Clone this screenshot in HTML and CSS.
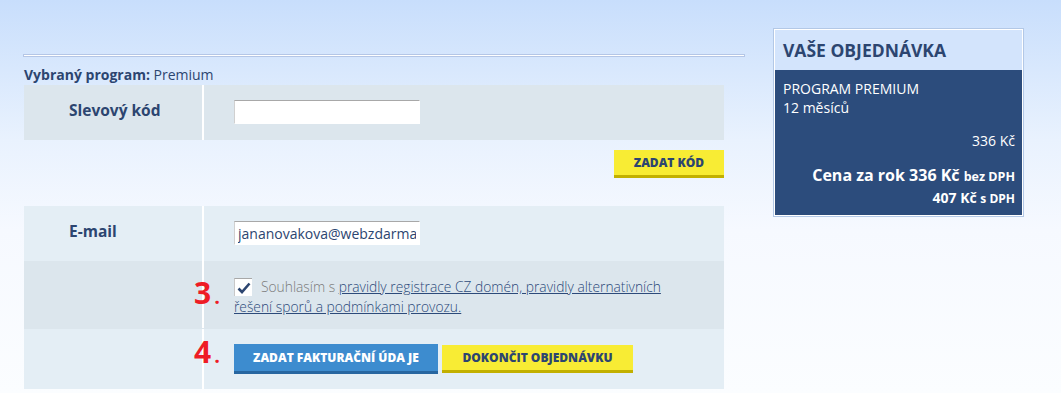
FILE: index.html
```html
<!DOCTYPE html>
<html lang="cs">
<head>
  <meta charset="utf-8">
  <title>Objednávka</title>
  <link rel="stylesheet" href="styles.css">
</head>
<body>
<div class="page">
  <div class="main">
    <div class="rule"></div>
    <p class="program"><b>Vybraný program:</b> Premium</p>

    <div class="form">
      <div class="row dark">
        <div class="lbl">Slevový kód</div>
        <div class="fld"><input class="txt" type="text"></div>
      </div>
    </div>
    <div class="actions"><button class="btn yellow">ZADAT KÓD</button></div>

    <div class="form">
      <div class="row light">
        <div class="lbl">E-mail</div>
        <div class="fld"><input class="txt" type="text" value="jananovakova@webzdarma.cz"></div>
      </div>
      <div class="row dark consent">
        <div class="lbl"></div>
        <div class="fld check">
          <p class="agree"><span class="box"><svg width="14" height="12" viewBox="0 0 14 12"><path d="M1.5 6.5 L5 10 L12.5 1.5" fill="none" stroke="#2c4570" stroke-width="2.6"/></svg></span>Souhlasím s <a href="#">pravidly registrace CZ domén, pravidly alternativních řešení sporů a podmínkami provozu.</a></p>
        </div>
        <span class="step s3">3<small>.</small></span>
      </div>
      <div class="row light buttons">
        <div class="lbl"></div>
        <div class="fld">
          <button class="btn blue">ZADAT FAKTURAČNÍ ÚDA JE</button>
          <button class="btn yellow big">DOKONČIT OBJEDNÁVKU</button>
        </div>
        <span class="step s4">4<small>.</small></span>
      </div>
    </div>
  </div>

  <aside class="order">
    <h2 class="order-head">VAŠE OBJEDNÁVKA</h2>
    <div class="order-body">
      <div>PROGRAM PREMIUM</div>
      <div>12 měsíců</div>
      <div class="sum">336 Kč</div>
      <div class="total">Cena za rok 336 Kč <small>bez DPH</small></div>
      <div class="vat">407 Kč <small>s DPH</small></div>
    </div>
  </aside>
</div>
</body>
</html>
```

FILE: styles.css
```css
html, body {
  margin: 0;
  height: 100%;
}
body {
  font-family: "Open Sans", "DejaVu Sans", sans-serif;
  color: #2c4570;
  background: linear-gradient(#c8defc 0, #e9f2fe 140px, #f6f9ff 230px, #fbfdff 393px);
}
.page {
  display: flex;
  align-items: flex-start;
  gap: 28px;
  padding: 28px 0 0 23px;
}
.main {
  width: 722px;
  padding-top: 26px;
}
.rule {
  height: 1px;
  background: #fff;
  border: 1px solid #b4c6e6;
}
.program {
  margin: 9px 0 1px 1px;
  font-size: 14px;
  line-height: 18px;
}
.form {
  width: 700px;
  margin-left: 1px;
}
.row {
  display: flex;
  position: relative;
}
.dark { background: #dce6ed; }
.light { background: #e4eef5; }
.lbl {
  width: 133px;
  padding: 15px 0 0 45px;
  border-right: 2px solid #fff;
  font-size: 15.5px;
  font-weight: bold;
  line-height: 20px;
  height: 40px;
}
.fld {
  flex: 1;
  padding: 15px 0 0 30px;
  height: 40px;
}
.txt {
  display: block;
  box-sizing: border-box;
  width: 186px;
  height: 24px;
  margin: 0;
  padding: 0 3px;
  border: 1px solid #fff;
  border-top-color: #a8a8a8;
  border-left-color: #d0d0d0;
  background: #fff;
  font-family: "Open Sans", sans-serif;
  font-size: 14px;
  color: #2c4570;
}
.actions {
  display: flex;
  justify-content: flex-end;
  width: 700px;
  margin: 10px 0 28px 1px;
}
.btn {
  border: none;
  margin: 0;
  padding: 0;
  font-family: "Open Sans", sans-serif;
  font-size: 12px;
  font-weight: 800;
  cursor: pointer;
}
.yellow {
  height: 28px;
  width: 110px;
  background: #f8ec34;
  border-bottom: 3px solid #c2b000;
  color: #2c4570;
}
.yellow.big {
  width: 191px;
  margin-top: 1px;
}
.blue {
  height: 30px;
  width: 204px;
  background: #3d8ccf;
  border-bottom: 3px solid #2766a0;
  color: #fff;
}
.buttons .lbl, .buttons .fld { height: 45px; }
.buttons .fld {
  display: flex;
  align-items: flex-start;
  gap: 4px;
}
.consent .lbl, .consent .fld { height: 52px; }
.check {
  padding-top: 16px;
  height: 53px;
}
.box {
  float: left;
  display: flex;
  align-items: center;
  justify-content: center;
  box-sizing: border-box;
  width: 18px;
  height: 18px;
  margin: 1px 9px 0 0;
  background: #fff;
  border-top: 1px solid #a8a8a8;
  border-left: 1px solid #c8c8c8;
}
.agree {
  margin: 0;
  width: 440px;
  font-size: 13.8px;
  font-weight: 300;
  line-height: 20px;
  color: #7a7a7a;
}
.agree a {
  color: #2c4a7a;
}
.step {
  position: absolute;
  left: 170px;
  font-size: 30px;
  font-weight: bold;
  line-height: 30px;
  color: #ee1c25;
}
.step small {
  font-size: 20px;
  margin-left: 3px;
}
.s3 { top: 17px; }
.s4 { top: 8px; }

.order {
  width: 251px;
  box-sizing: border-box;
  border: 1px solid #b3c8e6;
  background: #fff;
  padding: 1px;
}
.order-head {
  margin: 0;
  height: 40px;
  padding-left: 8px;
  background: #d3e4fc;
  font-size: 17.5px;
  line-height: 40px;
  font-weight: bold;
}
.order-body {
  background: #2c4c7c;
  color: #fff;
  padding: 9px 7px 7px 8px;
  font-size: 14px;
  line-height: 19px;
}
.sum {
  text-align: right;
  margin-top: 14px;
}
.total {
  text-align: right;
  margin-top: 14px;
  font-size: 16px;
  font-weight: bold;
  line-height: 22px;
}
.total small {
  font-size: 12.5px;
}
.vat {
  text-align: right;
  font-weight: bold;
}
.vat small {
  font-size: 12px;
}
```
